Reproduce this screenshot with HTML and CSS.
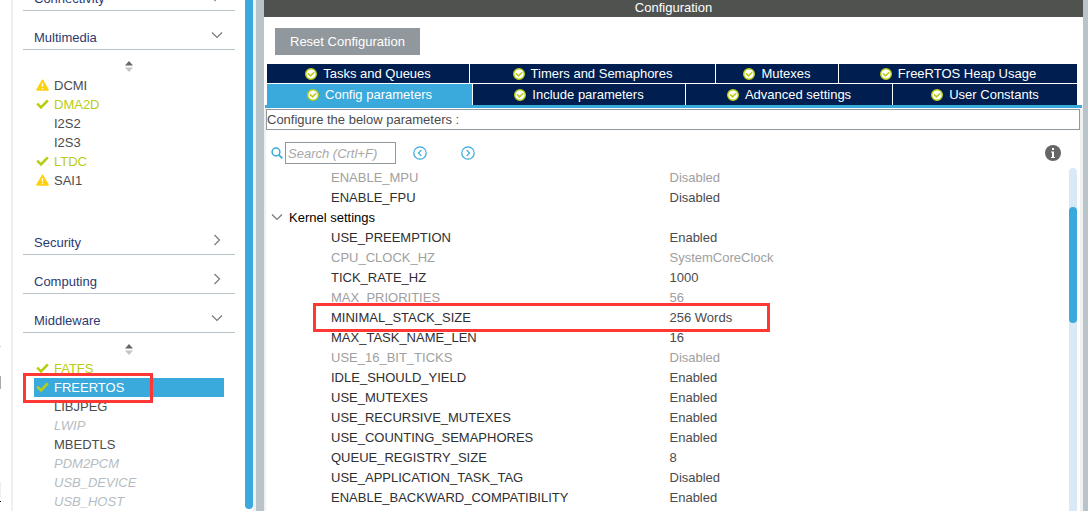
FILE: index.html
```html
<!DOCTYPE html>
<html lang="en">
<head>
<meta charset="utf-8">
<title>FreeRTOS Configuration</title>
<link rel="stylesheet" href="styles.css">
</head>
<body>
<svg class="defs" width="0" height="0" aria-hidden="true">
  <symbol id="down" viewBox="0 0 12 8"><path d="M1 1.5 6 6.5 11 1.5" fill="none" stroke="#77797b" stroke-width="1.2"/></symbol>
  <symbol id="right" viewBox="0 0 8 12"><path d="M1.5 1 6.5 6 1.5 11" fill="none" stroke="#77797b" stroke-width="1.2"/></symbol>
  <symbol id="sort" viewBox="0 0 8 11"><path d="M4 0 8 4.5H0z" fill="#666"/><path d="M0 6.5H8L4 11z" fill="#c4c4c4"/></symbol>
  <symbol id="tick" viewBox="0 0 13 11"><path d="M1.2 5.2 5 9 11.8 1.8" fill="none" stroke="#b9cd12" stroke-width="2.6"/></symbol>
  <symbol id="warn" viewBox="0 0 13 12"><path d="M6.5 1.3 12 11H1z" fill="#fdd20a" stroke="#fdd20a" stroke-width="1.6" stroke-linejoin="round"/><path d="M6.5 4.2V7.8M6.5 9V10.3" stroke="#fff" stroke-width="1.3"/></symbol>
  <symbol id="ok" viewBox="0 0 12 12"><circle cx="6" cy="6" r="5.3" fill="#fff" stroke="#b9cd12" stroke-width="1.4"/><path d="M3 5.4 5.5 7.9 9.2 4.3" fill="none" stroke="#b9cd12" stroke-width="1.5"/></symbol>
</svg>
<div class="app">
  <div class="edge"><svg viewBox="0 0 2 180"><path d="M0 15H1V16H0z" fill="#ccc"/><path d="M0 45H1V58H0z" fill="#aaa"/><path d="M0 151H1V167H0z" fill="#eee"/><path d="M0 170H1V171H0z" fill="#000"/></svg></div>
  <nav class="sidebar" aria-label="Categories">
    <div class="categories">
      <button class="category">Connectivity<svg class="chev-right"><use href="#right"/></svg></button>
      <button class="category">Multimedia<svg class="chev-down"><use href="#down"/></svg></button>
      <div class="group">
        <button class="sort" aria-label="Sort"><svg><use href="#sort"/></svg></button>
        <ul class="items">
          <li class="item"><svg><use href="#warn"/></svg><span>DCMI</span></li>
          <li class="item active"><svg><use href="#tick"/></svg><span>DMA2D</span></li>
          <li class="item"><span>I2S2</span></li>
          <li class="item"><span>I2S3</span></li>
          <li class="item active"><svg><use href="#tick"/></svg><span>LTDC</span></li>
          <li class="item"><svg><use href="#warn"/></svg><span>SAI1</span></li>
        </ul>
      </div>
      <button class="category">Security<svg class="chev-right"><use href="#right"/></svg></button>
      <button class="category">Computing<svg class="chev-right"><use href="#right"/></svg></button>
      <button class="category">Middleware<svg class="chev-down"><use href="#down"/></svg></button>
      <div class="group">
        <button class="sort" aria-label="Sort"><svg><use href="#sort"/></svg></button>
        <ul class="items">
          <li class="item active"><svg><use href="#tick"/></svg><span>FATFS</span></li>
          <li class="item selected"><svg><use href="#tick"/></svg><span>FREERTOS</span></li>
          <li class="item"><span>LIBJPEG</span></li>
          <li class="item off"><span>LWIP</span></li>
          <li class="item"><span>MBEDTLS</span></li>
          <li class="item off"><span>PDM2PCM</span></li>
          <li class="item off"><span>USB_DEVICE</span></li>
          <li class="item off"><span>USB_HOST</span></li>
        </ul>
      </div>
    </div>
  </nav>
  <div class="side-scroll"></div>
  <div class="divider"></div>
  <main class="main">
    <h1 class="title">Configuration</h1>
    <div class="actions"><button class="reset">Reset Configuration</button></div>
    <div class="tabs">
      <div class="tab-row">
        <button class="tab" style="flex-grow:202"><svg><use href="#ok"/></svg>Tasks and Queues</button>
        <button class="tab" style="flex-grow:245"><svg><use href="#ok"/></svg>Timers and Semaphores</button>
        <button class="tab" style="flex-grow:122"><svg><use href="#ok"/></svg>Mutexes</button>
        <button class="tab" style="flex-grow:238"><svg><use href="#ok"/></svg>FreeRTOS Heap Usage</button>
      </div>
      <div class="tab-row front">
        <button class="tab current" style="flex-grow:205"><svg><use href="#ok"/></svg>Config parameters</button>
        <button class="tab" style="flex-grow:212"><svg><use href="#ok"/></svg>Include parameters</button>
        <button class="tab" style="flex-grow:206"><svg><use href="#ok"/></svg>Advanced settings</button>
        <button class="tab" style="flex-grow:184"><svg><use href="#ok"/></svg>User Constants</button>
      </div>
    </div>
    <section class="panel">
      <p class="hint">Configure the below parameters :</p>
      <div class="toolbar">
        <label class="search"><svg class="lens" viewBox="0 0 12 12"><circle cx="5" cy="5" r="3.9" fill="none" stroke="#3aa9dc" stroke-width="1.5"/><path d="M7.8 7.8 11.4 11.4" stroke="#3aa9dc" stroke-width="1.8"/></svg><input type="text" placeholder="Search (Crtl+F)" aria-label="Search"></label>
        <button class="step" aria-label="Previous"><svg viewBox="0 0 14 14"><circle cx="7" cy="7" r="6.2"/><path d="M8.3 4.2 5.5 7 8.3 9.8"/></svg></button>
        <button class="step" aria-label="Next"><svg viewBox="0 0 14 14"><circle cx="7" cy="7" r="6.2"/><path d="M5.7 4.2 8.5 7 5.7 9.8"/></svg></button>
        <button class="info" aria-label="Information"><svg viewBox="0 0 16 16"><circle cx="8" cy="8" r="8" fill="#666"/><path d="M7 3H9V5H7zM6 6.5H9V12H10V13H6V12H7V7.5H6z" fill="#fff"/></svg></button>
      </div>
      <div class="params">
        <table>
          <tbody>
            <tr class="locked"><td>ENABLE_MPU</td><td>Disabled</td></tr>
            <tr><td>ENABLE_FPU</td><td>Disabled</td></tr>
            <tr><th colspan="2"><button class="fold"><svg><use href="#down"/></svg>Kernel settings</button></th></tr>
            <tr><td>USE_PREEMPTION</td><td>Enabled</td></tr>
            <tr class="locked"><td>CPU_CLOCK_HZ</td><td>SystemCoreClock</td></tr>
            <tr><td>TICK_RATE_HZ</td><td>1000</td></tr>
            <tr class="locked"><td>MAX_PRIORITIES</td><td>56</td></tr>
            <tr class="marked"><td>MINIMAL_STACK_SIZE</td><td>256 Words</td></tr>
            <tr><td>MAX_TASK_NAME_LEN</td><td>16</td></tr>
            <tr class="locked"><td>USE_16_BIT_TICKS</td><td>Disabled</td></tr>
            <tr><td>IDLE_SHOULD_YIELD</td><td>Enabled</td></tr>
            <tr><td>USE_MUTEXES</td><td>Enabled</td></tr>
            <tr><td>USE_RECURSIVE_MUTEXES</td><td>Enabled</td></tr>
            <tr><td>USE_COUNTING_SEMAPHORES</td><td>Enabled</td></tr>
            <tr><td>QUEUE_REGISTRY_SIZE</td><td>8</td></tr>
            <tr><td>USE_APPLICATION_TASK_TAG</td><td>Disabled</td></tr>
            <tr><td>ENABLE_BACKWARD_COMPATIBILITY</td><td>Enabled</td></tr>
          </tbody>
        </table>
        <div class="track"><div class="thumb"></div></div>
      </div>
    </section>
  </main>
</div>
</body>
</html>
```
FILE: styles.css
```css
*, *::after { box-sizing: border-box; }
body {
  margin: 0;
  background: #fff;
  color: #4a4b4d;
  font: 13px/19px "Liberation Sans", Arial, sans-serif;
}
button {
  margin: 0;
  padding: 0;
  border: 0;
  background: none;
  color: inherit;
  font: inherit;
}
svg { display: block; flex: none; }
.defs { position: absolute; }
.app { display: flex; height: 100vh; overflow: hidden; }

/* Sidebar */
.edge { display: flex; flex: none; align-items: flex-end; width: 13px; border-right: 2px solid #f0f0f0; }
.edge svg { width: 2px; height: 180px; }
.sidebar { flex: none; width: 232px; overflow: hidden; padding: 0 10px; }
.categories { margin-top: -28px; }
.category {
  display: flex;
  align-items: center;
  justify-content: space-between;
  width: 100%;
  height: 39px;
  padding: 14px 12px 0 11px;
  border-bottom: 1px solid #b9c4ca;
  color: #2c3a70;
  text-align: left;
}
.category svg { margin-bottom: 4px; }
.chev-down { width: 12px; height: 8px; }
.chev-right { width: 8px; height: 12px; margin-right: 2px; }
.group { padding: 11px 11px 26px; }
.sort { display: block; width: 8px; height: 15px; margin: 0 auto; }
.sort svg { width: 8px; height: 11px; margin-bottom: 4px; }
.items { margin: 0; padding: 0; list-style: none; }
.item { position: relative; display: flex; align-items: center; height: 19px; padding-left: 2px; }
.item svg { width: 13px; height: 12px; margin-bottom: 1px; }
.item svg + span { margin-left: 5px; }
.item span { margin-left: 18px; }
.active { color: #b9cd12; }
.off { color: #b5bdc2; font-style: italic; }
.selected { background: #3aa9dc; color: #fff; }
.selected::after,
.marked td:first-child::after {
  content: "";
  position: absolute;
  border: 3px solid #ff3735;
}
.selected::after { z-index: 1; left: -11px; top: -5px; width: 130px; height: 30px; }

.side-scroll { flex: none; width: 8px; margin-bottom: 2px; border-radius: 0 0 4px 4px; background: #3aa9dc; }
.divider { flex: none; width: 11px; border-left: 3px solid #f0f0f0; background: #b9c4ca; }

/* Configuration */
.main { display: flex; flex: 1; flex-direction: column; min-width: 0; border-right: 5px solid #b9c4ca; }
.title {
  flex: none;
  height: 17px;
  margin: 0;
  background: #50524f;
  color: #fff;
  font-size: 13px;
  font-weight: 400;
  line-height: 15px;
  text-align: center;
}
.actions { flex: none; padding: 11px 11px 9px; }
.reset { display: block; height: 27px; padding: 0 15px; background: #90979d; color: #fff; }
.tabs { flex: none; margin: 0 1px; border-bottom: 3px solid #3aa9dc; }
.tab-row { display: flex; gap: 1px; height: 19px; margin: 0 5px 1px 2px; }
.front { height: 21px; margin-bottom: 0; }
.tab {
  display: flex;
  flex-basis: 0;
  align-items: center;
  justify-content: center;
  gap: 6px;
  min-width: 0;
  background: #001f50;
  color: #fff;
  white-space: nowrap;
}
.tab svg { width: 12px; height: 12px; }
.current { background: #3aa9dc; }
.panel {
  display: flex;
  flex: 1;
  flex-direction: column;
  min-height: 0;
  padding-top: 1px;
  border: solid #f0f0f0;
  border-width: 0 3px 0 2px;
}
.hint { flex: none; height: 21px; margin: 0; border: 1px solid #90979d; }
.toolbar { display: flex; flex: none; align-items: center; height: 38px; padding: 8px 19px 0 5px; }
.search { display: flex; align-items: center; gap: 2px; margin-right: 17px; }
.lens { width: 12px; height: 12px; }
.search input {
  width: 111px;
  height: 22px;
  padding: 0 2px;
  border: 1px solid #90979d;
  border-radius: 0;
  color: #4a4b4d;
  font: inherit;
}
.search input::placeholder { color: #a8a8a8; font-style: italic; opacity: 1; }
.step { margin-right: 34px; }
.step svg { width: 14px; height: 14px; fill: none; stroke: #3aa9dc; stroke-width: 1.2; }
.info { margin-left: auto; }
.info svg { width: 16px; height: 16px; }

.params { display: flex; flex: 1; min-height: 0; padding-right: 3px; }
.params table { flex: 1; table-layout: fixed; border-collapse: collapse; align-self: flex-start; margin-top: -1px; }
.params tr { height: 20px; }
.params td { position: relative; width: 50%; padding: 0 0 0 2px; white-space: nowrap; }
.params td:first-child { padding-left: 65px; color: #2f2f31; }
.params th { padding: 0; font-weight: 400; text-align: left; }
.fold { display: flex; align-items: center; gap: 6px; padding-left: 5px; color: #000; }
.fold svg { width: 12px; height: 8px; }
.params .locked td { color: #a0a0a0; }
.marked td:first-child::after { z-index: 1; left: 47px; top: -4px; width: 457px; height: 29px; }
.track { width: 8px; padding-top: 39px; border-radius: 4px 4px 0 0; background: #d9e9f6; }
.thumb { height: 116px; border-radius: 4px; background: #3aa9dc; }
```
